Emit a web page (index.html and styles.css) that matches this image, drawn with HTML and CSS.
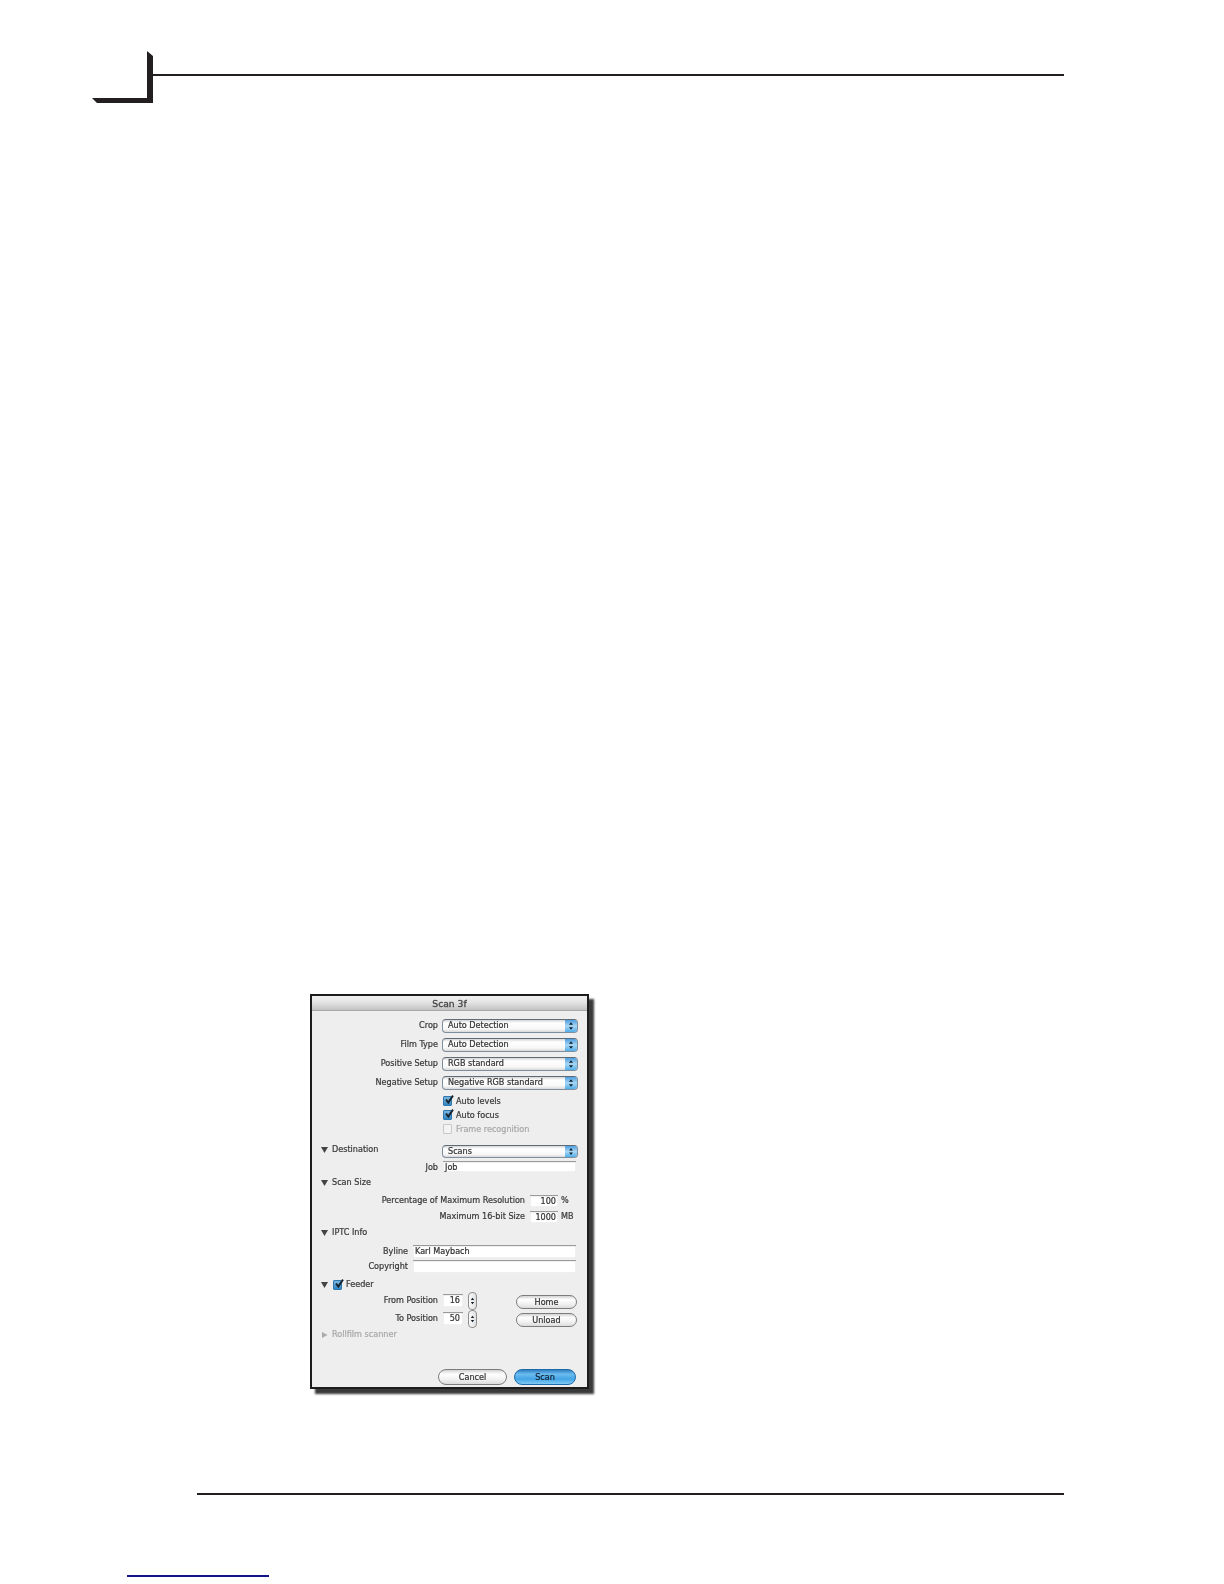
FILE: index.html
```html
<!DOCTYPE html>
<html lang="en">
<head>
<meta charset="utf-8">
<title>Scan 3f</title>
<link rel="stylesheet" href="styles.css">
</head>
<body>
<svg class="defs" width="0" height="0" aria-hidden="true">
  <symbol id="updown" viewBox="0 0 10 14"><path d="M5 2.5 7.4 5.6H2.6ZM5 11.5 2.6 8.4H7.4Z" fill="#10202c"/></symbol>
  <symbol id="down" viewBox="0 0 7 6"><path d="M0 0H7L3.5 6Z" fill="#444"/></symbol>
  <symbol id="right" viewBox="0 0 7 6"><path d="M1 0 6.5 3 1 6Z" fill="#aaa"/></symbol>
  <symbol id="check" viewBox="0 0 10 10"><path d="M2 4.5 4.3 7.6 9 .6" fill="none" stroke="#16222c" stroke-width="1.9"/></symbol>
</svg>
<div class="page">
  <header class="head">
    <svg class="bracket" viewBox="0 0 61 52" width="61" height="52"><path d="M55 0 61 5V52H5L0 47H55Z" fill="#231f20"/></svg>
    <div class="head-line"></div>
  </header>

  <section class="dialog">
    <div class="title">Scan 3f</div>
    <div class="body">
      <div class="row sel-row"><span class="label w-main">Crop</span><div class="select"><span>Auto Detection</span><i class="cap"><svg><use href="#updown"/></svg></i></div></div>
      <div class="row sel-row"><span class="label w-main">Film Type</span><div class="select"><span>Auto Detection</span><i class="cap"><svg><use href="#updown"/></svg></i></div></div>
      <div class="row sel-row"><span class="label w-main">Positive Setup</span><div class="select"><span>RGB standard</span><i class="cap"><svg><use href="#updown"/></svg></i></div></div>
      <div class="row sel-row"><span class="label w-main">Negative Setup</span><div class="select"><span>Negative RGB standard</span><i class="cap"><svg><use href="#updown"/></svg></i></div></div>

      <div class="row chk-row mt2"><i class="box on"><svg><use href="#check"/></svg></i><span>Auto levels</span></div>
      <div class="row chk-row"><i class="box on"><svg><use href="#check"/></svg></i><span>Auto focus</span></div>
      <div class="row chk-row off"><i class="box"></i><span>Frame recognition</span></div>

      <div class="row sec mt6">
        <svg class="tri"><use href="#down"/></svg><span class="sec-name sec-wide">Destination</span>
        <div class="select low"><span>Scans</span><i class="cap"><svg><use href="#updown"/></svg></i></div>
      </div>
      <div class="row mt4"><span class="label w-main">Job</span><div class="field job">Job</div></div>

      <div class="row sec mt1"><svg class="tri"><use href="#down"/></svg><span class="sec-name">Scan Size</span></div>
      <div class="row mt4"><span class="label w-long">Percentage of Maximum Resolution</span><div class="field num">100</div><span class="unit">%</span></div>
      <div class="row mt2"><span class="label w-long">Maximum 16-bit Size</span><div class="field num">1000</div><span class="unit">MB</span></div>

      <div class="row sec mt2"><svg class="tri"><use href="#down"/></svg><span class="sec-name">IPTC Info</span></div>
      <div class="row mt5"><span class="label w-short">Byline</span><div class="field wide">Karl Maybach</div></div>
      <div class="row mt1"><span class="label w-short">Copyright</span><div class="field wide"></div></div>

      <div class="row sec mt4"><svg class="tri"><use href="#down"/></svg><i class="box on small-gap"><svg><use href="#check"/></svg></i><span>Feeder</span></div>
      <div class="row pos"><span class="label w-main">From Position</span><div class="field pos-f">16</div><i class="stepper"><svg><use href="#updown"/></svg></i><button class="pill side">Home</button></div>
      <div class="row pos"><span class="label w-main">To Position</span><div class="field pos-f">50</div><i class="stepper"><svg><use href="#updown"/></svg></i><button class="pill side">Unload</button></div>
      <div class="row sec off"><svg class="tri"><use href="#right"/></svg><span class="sec-name">Rollfilm scanner</span></div>

      <div class="actions">
        <button class="pill big">Cancel</button>
        <button class="pill big primary">Scan</button>
      </div>
    </div>
  </section>

  <div class="foot-line"></div>
  <div class="link-line"></div>
</div>
</body>
</html>
```
FILE: styles.css
```css
* { box-sizing: border-box; }
html, body { margin: 0; padding: 0; background: #fff; }
.defs { position: absolute; }
.page { width: 1224px; height: 1584px; overflow: hidden; display: flex; flex-direction: column; }

.head { display: flex; align-items: flex-start; height: 103px; padding: 51px 0 0 92px; }
.bracket { display: block; flex: none; }
.head-line { width: 911px; height: 2px; margin-top: 23px; background: #231f20; }

.dialog {
  width: 279px; height: 395px; margin: 891px 0 0 310px; flex: none;
  border: 2px solid #1c1c1c;
  background: #eeeeee;
  box-shadow: 5px 5px 2px #3a3a3a;
  display: flex; flex-direction: column;
  font: 8.1px/1 "DejaVu Sans", sans-serif;
  color: #3a3a3a;
  -webkit-text-stroke: .22px currentColor;
}
.title {
  height: 15px; flex: none; text-align: center;
  font-size: 9.2px; line-height: 15px;
  -webkit-text-stroke: .3px currentColor;
  background: linear-gradient(#f0f0f0, #e4e4e4 45%, #c2c2c2);
  border-bottom: 1px solid #a8a8a8; color: #444;
  filter: blur(.35px);
}
.body { flex: 1; display: flex; flex-direction: column; padding-top: 5px; filter: blur(.5px); }

.row { display: flex; align-items: center; height: 14px; flex: none; white-space: nowrap; }
.sel-row { height: 19px; }
.chk-row { height: 14px; padding-left: 131px; }
.pos { height: 18px; }
.mt1 { margin-top: 1px; }
.mt2 { margin-top: 2px; }
.mt4 { margin-top: 4px; }
.mt5 { margin-top: 5px; }
.mt6 { margin-top: 6.5px; }

.label { text-align: right; flex: none; }
.w-main { width: 126px; margin-right: 4px; }
.w-long { width: 213px; margin-right: 5px; }
.w-short { width: 96px; margin-right: 5px; }

.select {
  width: 136px; height: 14px; flex: none; display: flex; align-items: center; justify-content: space-between;
  padding-left: 5px; border: 1px solid #7f8e9c; border-radius: 4px; border-top-color: #5f6b76;
  background: linear-gradient(#d4d4d4, #fff 25%, #f8f8f8 75%, #d8d8d8);
  color: #333; overflow: hidden;
}
.select.low { height: 13px; margin-top: 4px; }
.cap {
  width: 12px; height: 100%; flex: none; display: block;
  background: linear-gradient(#4c9ee0, #a9d6f3 50%, #50aeea);
}
.cap svg { display: block; width: 100%; height: 100%; }

.box {
  width: 9px; height: 10px; flex: none; display: block; margin-right: 4px;
  border: 1px solid #c8c8c8; background: #f3f3f3; border-radius: 1px;
}
.box.on { border-color: #2f78ad; background: linear-gradient(#7cb5de, #2f86c4); }
.box svg { display: block; width: 10px; height: 10px; margin: -2px 0 0 0; overflow: visible; }
.off { color: #a8a8a8; }

.sec { padding-left: 9px; }
.tri { width: 7px; height: 6px; flex: none; margin-right: 4px; display: block; }
.sec-wide { width: 110px; }
.sec-name { flex: none; }
.small-gap { margin-left: 1px; margin-right: 4px; }

.field {
  height: 11px; flex: none; background: #fff; line-height: 10px; color: #333;
  border-top: 1px solid #9a9a9a; box-shadow: inset 0 0 0 .5px #e2e2e2;
}
.job { width: 133px; margin: -2px 0 0 1px; padding-left: 2px; }
.num { width: 28px; height: 12px; text-align: right; padding-right: 2px; }
.unit { margin-left: 3px; }
.wide { width: 163px; padding-left: 2px; height: 13px; margin-top: -1px; line-height: 11px; }
.pos-f { width: 20px; height: 13px; margin-left: 1px; text-align: right; padding-right: 3px; line-height: 11px; }

.stepper {
  width: 9px; height: 18px; margin-left: 5px; flex: none; display: block;
  border: 1px solid #8f8f8f; border-radius: 4px; background: linear-gradient(90deg, #fafafa, #e0e0e0);
}
.stepper svg { display: block; width: 100%; height: 100%; }

.pill {
  font: inherit; color: #333; padding: 0; flex: none;
  border: 1px solid #7d7d7d; border-radius: 9px;
  background: linear-gradient(#d2d2d2, #fff 30%, #f2f2f2 65%, #dcdcdc);
}
.side { width: 61px; height: 14px; margin: 3px 0 0 39px; }
.actions { margin-top: auto; display: flex; justify-content: flex-end; gap: 7px; padding: 0 11px 2px 0; }
.big { height: 16px; width: 69px; }
.primary {
  width: 62px; border-color: #1c6aa8; color: #123;
  background: linear-gradient(#2f7fc2, #6cbcee 30%, #43a4e6 65%, #80cbf3);
}

.foot-line { width: 867px; height: 2px; margin: 104px 0 0 197px; background: #231f20; flex: none; }
.link-line { width: 142px; height: 1.5px; margin: 80px 0 0 127px; background: #14148a; flex: none; }
```
